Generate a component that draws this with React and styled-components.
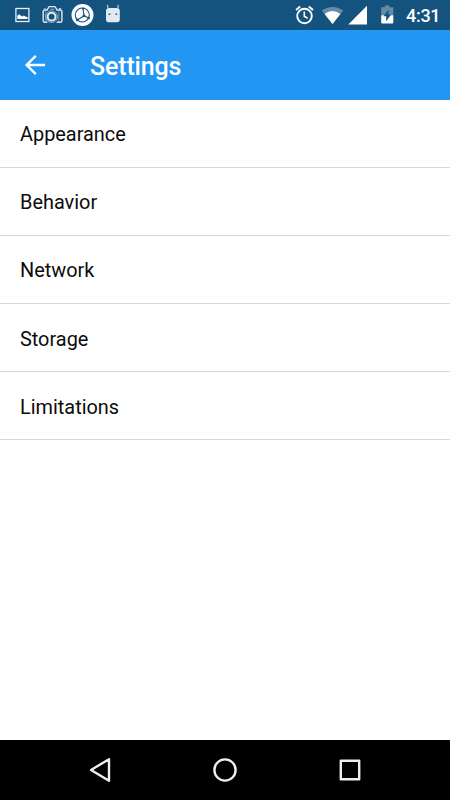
import React from "react";
import styled, { createGlobalStyle } from "styled-components";

const GlobalStyle = createGlobalStyle`
    * {
        box-sizing: border-box;
    }
    body {
        margin: 0;
        background-color: #fff;
        font-family: Roboto, "Liberation Sans", sans-serif;
    }
`
const Screen = styled.div`
    display: flex;
    flex-direction: column;
    width: 450px;
    height: 800px;
    overflow: hidden;
    background-color: #fff;
`
const StatusBar = styled.div`
    display: flex;
    justify-content: space-between;
    height: 30px;
    padding: 0 9px 0 12px;
    background-color: #15537f;
`
const StatusGroup = styled.div`
    display: flex;
    align-items: center;
`
const StatusIcon = styled.svg`
    display: block;
    flex: none;
    height: 30px;
    width: ${props => props.width}px;
`
const Clock = styled.span`
    width: 35px;
    margin-left: 8px;
    padding-top: 2px;
    color: #fff;
    font-size: 18px;
    font-weight: 500;
    line-height: 28px;
    letter-spacing: -0.3px;
    white-space: nowrap;
`
const Toolbar = styled.header`
    display: flex;
    align-items: center;
    height: 70px;
    padding: 0 20px;
    background-color: #2196f3;
`
const BackButton = styled.button`
    width: 30px;
    height: 30px;
    margin-right: 40px;
    padding: 0;
    border: 0;
    background: none;
`
const Title = styled.h1`
    margin: 0;
    padding-top: 4px;
    color: #fff;
    font-size: 25px;
    font-weight: 500;
    line-height: 30px;
    letter-spacing: -0.15px;
`
const List = styled.main`
    flex: 1;
`
const Row = styled.div`
    display: flex;
    align-items: center;
    height: 68.1px;
    padding: 2.4px 20px 0;
    border-bottom: 1px solid #d9d9d9;
    color: #0c0c0c;
    font-size: 19.9px;
`
const NavBar = styled.nav`
    display: flex;
    align-items: center;
    justify-content: center;
    gap: 95px;
    height: 60px;
    background-color: #000;
`
const NavIcon = styled.svg`
    display: block;
    width: 30px;
    height: 30px;
    fill: none;
    stroke: #eee;
    stroke-width: 2.4;
    stroke-linejoin: round;
`

const items = ["Appearance", "Behavior", "Network", "Storage", "Limitations"];

const Notifications = () => (
    <StatusGroup>
        {/* picture */}
        <StatusIcon width={26} viewBox="12 0 26 30">
            <rect x="15.9" y="8.5" width="13" height="13" fill="none" stroke="#e7eef3" strokeWidth="1.3" />
            <path d="M17.3 19v-3.2l1.8-1.6 2 1.6 1.2.6 1.4-.8 1.6.9 2.3.6V19z" fill="#fff" />
        </StatusIcon>
        {/* camera */}
        <StatusIcon width={30} viewBox="38 0 30 30">
            <g fill="none" stroke="#e3ebf1">
                <path d="M47.3 22.2h-2.7q-1.4 0-1.4-1.4v-9.3q0-1.4 1.4-1.4h2.6l1.3-2.6q.4-.9 1.3-.9h4.6q.9 0 1.3.9l1.3 2.6h3.5q1.4 0 1.4 1.4v9.3q0 1.4-1.4 1.4h-3.8" strokeWidth="1.4" />
                <path d="M45.7 11v10.5M58.8 11v10.5" strokeWidth="1" opacity=".4" />
                <circle cx="51.6" cy="16.7" r="5.8" strokeWidth="1" opacity=".6" />
                <circle cx="51.6" cy="16.7" r="3.9" strokeWidth="2" />
                <path d="M50 9.2h4.4" strokeWidth="1" opacity=".6" />
            </g>
            <path d="M58.8 8.2h2.4v1.6h-2.4zM43.8 8.5H46v1h-2.2z" fill="#e3ebf1" />
        </StatusIcon>
        {/* sync wheel */}
        <StatusIcon width={30} viewBox="68 0 30 30">
            <circle cx="82.5" cy="15" r="11" fill="#fff" />
            <g fill="none" stroke="#15537f" strokeWidth="1.1">
                <circle cx="82.3" cy="15" r="7" />
                <path d="M84 15.8l-1-7.2M84 15.8l4.8 2.3M84 15.8l-6.9 4.4" />
            </g>
            <g fill="#15537f">
                <circle cx="84" cy="15.8" r="1.4" />
                <circle cx="83.2" cy="8.6" r="1.2" />
                <circle cx="88.7" cy="18" r="1.3" />
                <circle cx="77.2" cy="19.9" r="1.3" />
            </g>
        </StatusIcon>
        {/* robot */}
        <StatusIcon width={30} viewBox="98 0 30 30">
            <path d="M106 11.2q0-3.2 3.2-3.2h7.4q3.2 0 3.2 3.2v8.4q0 2.6-2.6 2.6h-8.6q-2.6 0-2.6-2.6z" fill="#e1eaf0" />
            <path d="M107.4 4.8l.7 4.2M118.4 4.8l-.7 4.2" stroke="#b5c9d8" strokeWidth="1.3" />
            <path d="M108.6 13.4h1.7v1.6h-1.7zM115.5 13.4h1.7v1.6h-1.7z" fill="#15537f" />
        </StatusIcon>
    </StatusGroup>
)

const SystemStatus = () => (
    <StatusGroup>
        {/* alarm */}
        <StatusIcon width={27} viewBox="291 0 27 30">
            <g fill="none" stroke="#fff">
                <circle cx="304.5" cy="16" r="7.3" strokeWidth="1.9" />
                <path d="M304.3 11.5v4.8l3.4 2" strokeWidth="1.6" />
                <path d="M296 10l4.2-3.5M308.8 6.5L313 10" strokeWidth="1.9" />
            </g>
        </StatusIcon>
        {/* wifi */}
        <StatusIcon width={29} viewBox="318 0 29 30">
            <path d="M332.5 24L321.8 10.5Q326.6 7 332.5 7t10.8 3.5z" fill="#648ca9" />
            <path d="M332.5 24l-7.9-9.9q3.6-3 7.9-3t7.9 3z" fill="#fff" />
        </StatusIcon>
        {/* cell signal */}
        <StatusIcon width={27} viewBox="347 0 27 30">
            <path d="M348.3 24.4L367 5.8v18.6z" fill="#fff" />
        </StatusIcon>
        {/* battery */}
        <StatusIcon width={24} viewBox="374 0 24 30">
            <path d="M381.2 7.3h3.7V5.5h4.6v1.8h3.8v8h-12.1z" fill="#648ca9" />
            <path d="M381.2 15.3h12.1v7.3q0 .8-.8.8h-10.5q-.8 0-.8-.8z" fill="#fff" />
            <path d="M388.5 9.8v4.8h2.6l-4.9 6.6v-5h-2.8z" fill="#15537f" />
        </StatusIcon>
        <Clock>4:31</Clock>
    </StatusGroup>
)

export default function App() {
    return (
        <>
            <GlobalStyle />
            <Screen>
                <StatusBar>
                    <Notifications />
                    <SystemStatus />
                </StatusBar>
                <Toolbar>
                    <BackButton aria-label="Back">
                        <svg width="30" height="30" viewBox="0 0 30 30" fill="none" stroke="#fff" strokeWidth="2.4">
                            <path d="M25 15H7M15.8 5.9L6.7 15l9.1 9.1" />
                        </svg>
                    </BackButton>
                    <Title>Settings</Title>
                </Toolbar>
                <List>
                    {items.map(item => <Row key={item}>{item}</Row>)}
                </List>
                <NavBar>
                    <NavIcon viewBox="85 755 30 30">
                        <path d="M91 770l18-10.8v21.6z" />
                    </NavIcon>
                    <NavIcon viewBox="210 755 30 30">
                        <circle cx="225" cy="770" r="10.6" />
                    </NavIcon>
                    <NavIcon viewBox="335 755 30 30">
                        <rect x="340.8" y="760.8" width="18.4" height="18.4" />
                    </NavIcon>
                </NavBar>
            </Screen>
        </>
    );
}
